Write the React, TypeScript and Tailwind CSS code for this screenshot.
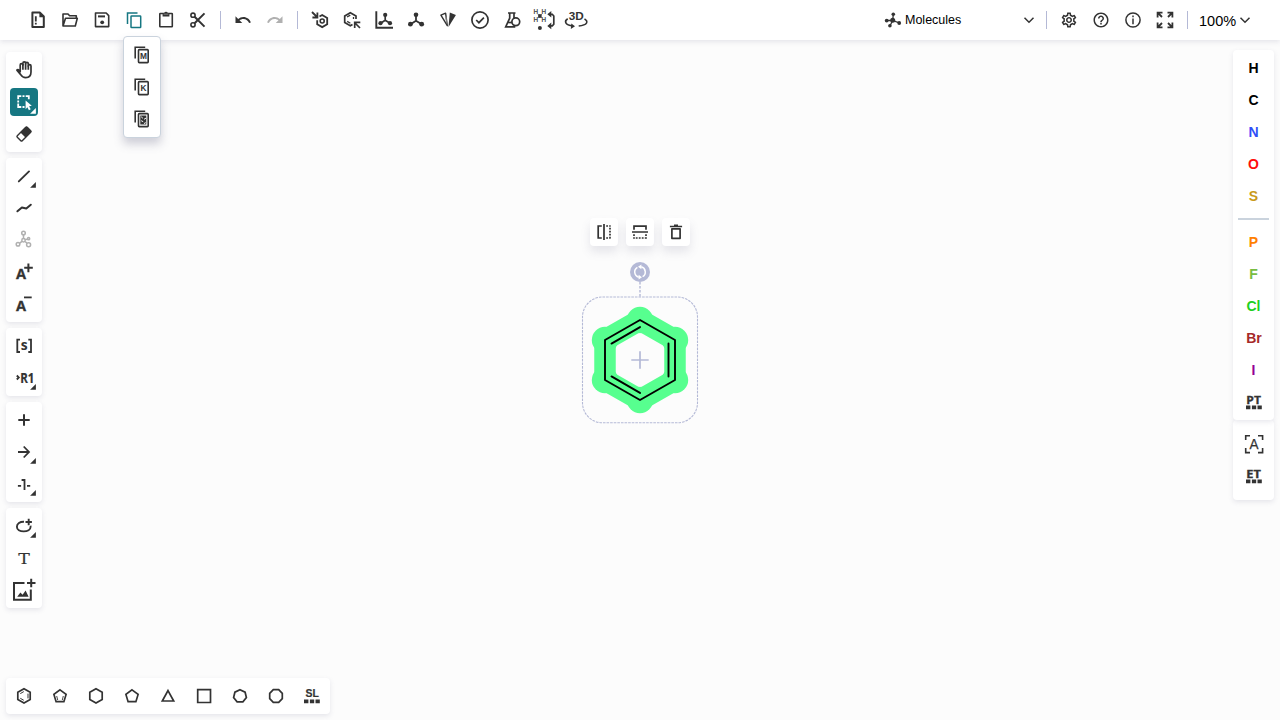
import type { ReactNode } from "react";
import { MdOutlineSettings, MdHelpOutline } from "react-icons/md";

const SANS = "font-['Liberation_Sans',Arial,sans-serif]";
const HUMANIST = "Open Sans, Noto Sans, sans-serif";

function Icon({ children, w = 1.8, className = "" }: { children: ReactNode; w?: number; className?: string }) {
  return (
    <svg
      width="24"
      height="24"
      viewBox="0 0 24 24"
      fill="none"
      stroke="currentColor"
      strokeWidth={w}
      className={`shrink-0 overflow-visible ${className}`}
    >
      {children}
    </svg>
  );
}

const solid = { fill: "currentColor", stroke: "none" };

function Label({ x, y, size, children, weight = 700, length, family = "Liberation Sans, Arial, sans-serif", outline = 0 }: {
  x: number; y: number; size: number; children: string; weight?: number; length?: number; family?: string; outline?: number;
}) {
  return (
    <text x={x} y={y} fontSize={size} fontWeight={weight} fontFamily={family} textLength={length} lengthAdjust="spacingAndGlyphs" fill="currentColor" strokeWidth={outline}>
      {children}
    </text>
  );
}

function TopButton({ children, className = "" }: { children: ReactNode; className?: string }) {
  return <button className={`flex h-8 w-8 items-center justify-center ${className}`}>{children}</button>;
}

function Divider() {
  return <div className="mx-1.5 h-[18px] w-px bg-[#b4b9d6]" />;
}

function Tool({ children, active = false, more = false, className = "" }: {
  children: ReactNode; active?: boolean; more?: boolean; className?: string;
}) {
  return (
    <button className={`relative flex h-7 w-7 items-center justify-center rounded ${active ? "bg-[#167782] text-white" : ""} ${className}`}>
      {children}
      {more && (
        <svg width="6" height="6" viewBox="0 0 6 6" className="absolute right-[2px] bottom-[2px]" fill="currentColor">
          <path d="M5.9 0v5.8H.1z" />
        </svg>
      )}
    </button>
  );
}

function ToolGroup({ children }: { children: ReactNode }) {
  return <div className="flex flex-col gap-1 rounded bg-white p-1 shadow-[0_2px_5px_rgba(103,104,132,0.15)]">{children}</div>;
}

function Undo() {
  return (
    <g transform="translate(3 3) scale(.75)">
      <path {...solid} d="M12.5 8c-2.65 0-5.05.99-6.9 2.6L2 7v9h9l-3.62-3.62c1.39-1.16 3.16-1.88 5.12-1.88 3.54 0 6.55 2.31 7.6 5.5l2.37-.78C21.08 11.03 17.15 8 12.5 8z" />
    </g>
  );
}

function CopyFrame({ children }: { children: ReactNode }) {
  return (
    <Icon w={1.6}>
      <path d="M5.2 15.5V4.3h10" />
      <rect x="8.5" y="6.6" width="9.7" height="13" rx=".8" />
      {children}
    </Icon>
  );
}

function Squares() {
  return <path {...solid} d="M4 15.5h4.4v3.8H4zM9.9 15.5h4.3v3.8H9.9zM15.5 15.5h4.3v3.8h-4.3z" />;
}

function Chevron() {
  return (
    <svg width="12" height="8" viewBox="0 0 12 8" fill="none" stroke="#333" strokeWidth="1.5">
      <path d="M1.5 1.8 6 6.3l4.5-4.5" />
    </svg>
  );
}

function Header() {
  return (
    <header className="relative z-10 flex h-10 shrink-0 items-center bg-white pl-[22px] shadow-[0_2px_5px_rgba(103,104,132,0.15)]">
      <TopButton>
        <Icon>
          <path d="M6.4 4.6h7.6l3.8 3.9v10.6H6.4z" strokeWidth="2" strokeLinejoin="round" />
          <path {...solid} d="M13.4 4.2v5H18z" />
          <path d="M9.8 8.2v5.2M9.8 14.8v1.8" />
        </Icon>
      </TopButton>
      <TopButton>
        <Icon w={1.6}>
          <path d="M5 18V6h5l1.6 1.7h6.7v2.5M5 18l2.5-7.8h11.8L17.3 18z" strokeLinejoin="round" />
        </Icon>
      </TopButton>
      <TopButton>
        <Icon w={1.6}>
          <path d="M5.5 5h10.7L18.7 7.6v11H5.5z" strokeLinejoin="round" />
          <path d="M8 8.4h7" strokeWidth="2" />
          <circle cx="12.2" cy="14.3" r="1.9" {...solid} />
        </Icon>
      </TopButton>
      <TopButton className="text-[#167782]">
        <Icon w={1.5}>
          <path d="M5.5 16V5h10" />
          <rect x="9" y="8" width="9.7" height="11.5" rx=".6" />
        </Icon>
      </TopButton>
      <TopButton>
        <Icon w={1.6}>
          <rect x="5.8" y="5.5" width="12.5" height="13.3" rx=".5" />
          <path {...solid} d="M8.6 5h1.6a1.9 1.9 0 0 1 3.6 0h1.6v3.6H8.6z" />
          <path d="M9.6 6.2h4.8" stroke="#777" strokeWidth="1.2" />
        </Icon>
      </TopButton>
      <TopButton>
        <Icon w={1.6}>
          <circle cx="7" cy="7.2" r="2.1" />
          <circle cx="7" cy="16.8" r="2.1" />
          <path d="m8.6 8.7 9.9 9.9M8.6 15.3l9.9-9.9" strokeWidth="2" />
        </Icon>
      </TopButton>
      <Divider />
      <TopButton><Icon><Undo /></Icon></TopButton>
      <TopButton className="text-[#b0b0b0]"><Icon className="-scale-x-100"><Undo /></Icon></TopButton>
      <Divider />
      <TopButton>
        <Icon w={1.8}>
          <path d="m4 4 5 5M9.4 4.5v5H4.4" />
          <path d="M11.5 8.5 14.2 7l5 2.9v6.3l-5 2.9-5-2.9v-4" />
          <circle cx="14.2" cy="13" r="2" strokeWidth="1.6" />
        </Icon>
      </TopButton>
      <TopButton>
        <Icon w={1.7}>
          <path d="M12.5 16.4 10.3 17.7 4.7 14.5V8l5.6-3.2L16 8v3" />
          <path d="m7 9 3.3-1.9M7.2 13.4l3.2 1.8M13.5 9v2" strokeWidth="1.3" />
          <path d="m20 20-5-5M14.7 20v-5.6h5.6" />
        </Icon>
      </TopButton>
      <TopButton>
        <Icon w={1.9}>
          <path d="M4.3 3.3v16.4H21" />
          <path d="M13.2 7v5.3l-4.6 3M13.2 12.3l4.8 3" strokeWidth="1.7" />
          <g {...solid}><circle cx="13.2" cy="6.9" r="2.1" /><circle cx="8.5" cy="15.2" r="2.1" /><circle cx="18" cy="15.2" r="2.1" /></g>
        </Icon>
      </TopButton>
      <TopButton>
        <Icon w={1.8}>
          <path d="M12 7v5.8l-5.5 3.5M12 12.8l5.7 3.5" />
          <g {...solid}><circle cx="12" cy="6.8" r="2.3" /><circle cx="6.4" cy="16.2" r="2.4" /><circle cx="17.7" cy="16.2" r="2.4" /></g>
        </Icon>
      </TopButton>
      <TopButton>
        <Icon w={1.4}>
          <path d="m4.9 7.2 4.7-2 1.7 12.5z" strokeLinejoin="round" />
          <path d="m10 8.5.8 7" strokeWidth="1" stroke="#888" />
          <path {...solid} d="M13.8 4.4 19.9 7l-7.4 11.9z" />
        </Icon>
      </TopButton>
      <TopButton>
        <Icon w={1.7}>
          <circle cx="12" cy="12" r="8.1" />
          <path d="m8.2 12 2.7 2.7 5-5" />
        </Icon>
      </TopButton>
      <TopButton>
        <Icon w={1.7}>
          <path d="M8 5h7.5M9.7 5v5.2L5.7 18.8h9.6M14 5v5" />
          <circle cx="15.8" cy="13.8" r="3.9" />
          <path d="M8 14.5h4" />
        </Icon>
      </TopButton>
      <TopButton>
        <Icon w={1.7}>
          <g fontSize="6.3" fontFamily="Liberation Sans, sans-serif" fill="currentColor" stroke="currentColor" strokeWidth=".2">
            <text x="1.5" y="6">H</text><text x="9.6" y="6">H</text>
            <text x="1.5" y="14.3">H</text><text x="9.6" y="14.3">H</text>
          </g>
          <path d="m5.8 6 4 4M9.8 6l-4 4" strokeWidth=".8" />
          <g {...solid}><circle cx="7.9" cy="8" r="1.9" /><circle cx="7.9" cy="20" r="2" /><path d="M15.3 6.3 19.3 3v6.6zM15.3 17.9l4-3.3v6.6z" /></g>
          <path d="M18.5 6.3h1.8l1.5 1.7v8.2l-1.5 1.7h-1.8" />
        </Icon>
      </TopButton>
      <TopButton>
        <Icon w={1.6}>
          <Label x={4.8} y={12.3} size={11.6} length={15}>3D</Label>
          <path d="M3.7 10.8C.2 13 .5 16.8 9 18M20.5 10.8c4.2 2.7 3 6.3-5.8 7.2" />
          <path {...solid} d="m11 18.2-4.2 2.7.5-5.3z" />
        </Icon>
      </TopButton>

      <div className={`ml-auto flex items-center text-black ${SANS}`}>
        <Icon w={1.3} className="text-[#333]">
          <path d="M5.5 12.5h6.2l.6-6M11.7 12.5l6.5 2.4M11.7 12.5 9 17.7" />
          <g {...solid}><circle cx="5.7" cy="12.6" r="1.9" /><circle cx="12.3" cy="6.2" r="1.8" /><circle cx="18.2" cy="15" r="1.9" /><circle cx="8.9" cy="17.8" r="1.8" /><circle cx="11.7" cy="12.3" r="2.5" /></g>
        </Icon>
        <span className="w-[118px] text-[12.5px] leading-5">Molecules</span>
        <Chevron />
      </div>
      <div className="ml-[5px] flex items-center">
        <Divider />
        <TopButton><MdOutlineSettings size={18} /></TopButton>
        <TopButton><MdHelpOutline size={18} /></TopButton>
        <TopButton>
          <Icon w={1.5}><circle cx="12" cy="12" r="7.1" /><path d="M12 10.6v5.7M12 7.5v1.8" /></Icon>
        </TopButton>
        <TopButton>
          <Icon w={1.8}>
            <path d="M4.6 9.5V4.7h4.9M14.5 4.7h4.9v4.8M19.4 14.5v4.8h-4.9M9.5 19.3H4.6v-4.8M5 5l4 4M19 5l-4 4M19 19l-4-4M5 19l4-4" />
          </Icon>
        </TopButton>
        <Divider />
      </div>
      <div className={`ml-[5px] flex w-[81px] items-center text-black ${SANS}`}>
        <span className="w-10 pt-px text-[14.5px] leading-5">100%</span>
        <Chevron />
      </div>
    </header>
  );
}

function CopyMenu() {
  return (
    <div className="absolute top-9 left-[123px] z-20 flex w-[38px] flex-col items-center gap-2 rounded border border-[#cad3dd] bg-white pt-1.5 pb-1.5 shadow-[0_6px_10px_rgba(103,104,132,0.3)]">
      <CopyFrame><Label x={9.9} y={16.3} size={8.6} length={7}>M</Label></CopyFrame>
      <CopyFrame><Label x={10.6} y={16.3} size={8.8} length={6}>K</Label></CopyFrame>
      <CopyFrame>
        <path {...solid} d="M10.3 8.5h6v9h-6z" />
        <path d="m11.2 9.8 1.7 1.5M14 12.3l2-1.2M11.2 13.7l2 1M14 16.5l1.8-.8" stroke="#fff" strokeWidth="1" />
      </CopyFrame>
    </div>
  );
}

function LeftBar() {
  return (
    <aside className="flex w-9 flex-col gap-1.5">
      <ToolGroup>
        <Tool>
          <Icon w={1.7}>
            <path
              strokeLinejoin="round"
              d="M8.2 13.8V7a1.35 1.35 0 0 1 2.7 0V5.3a1.35 1.35 0 0 1 2.7 0v.5a1.35 1.35 0 0 1 2.7 0V8a1.35 1.35 0 0 1 2.7 0v6c0 3.5-2 5.6-5.3 5.6-2.5 0-3.8-1-5-3l-3.8-4.5c.8-1 2.2-.6 3.3 1.7z"
            />
            <path d="M10.9 6v5.8M13.6 5.8v6M16.3 7.5v4.3" />
          </Icon>
        </Tool>
        <Tool active more>
          <Icon w={1.8}>
            <path d="M9.3 17H6.2v-3.4M6.2 9.2V6.2h3.1M13.7 6.2h3.1v3M6.2 10.4v2M10.5 6.2h2M10.5 17h2" />
            <path {...solid} d="m13.6 10.5 6.2 5.2-2.7.6 1.6 3-1.8.9-1.5-3-1.8 2z" />
          </Icon>
        </Tool>
        <Tool>
          <Icon w={1.4}>
            <g transform="rotate(-45 12 12)">
              <rect x="5" y="8.5" width="14" height="7" rx="1" />
              <rect x="10.5" y="8.5" width="8.5" height="7" {...solid} />
            </g>
          </Icon>
        </Tool>
      </ToolGroup>
      <ToolGroup>
        <Tool more><Icon w={1.9}><path d="M6.8 17.4 17 7.4" strokeLinecap="round" /></Icon></Tool>
        <Tool><Icon w={2}><path d="m5.4 15.3 4.5-3.9 4.4 1L18.8 8.7" strokeLinecap="round" strokeLinejoin="round" /></Icon></Tool>
        <Tool className="text-[#b0b0b0]">
          <Icon w={1.5}>
            <path d="M11.5 6.8v4M10 13.3l-2.3 1.8M13.1 13.5l1.8 1.6M13.2 11.7l2-.6" />
            <circle cx="11.5" cy="5" r="1.8" /><circle cx="11.5" cy="12.3" r="1.7" /><circle cx="6" cy="16.2" r="1.8" /><circle cx="16.6" cy="16.7" r="2" /><circle cx="16.6" cy="10.7" r="1.1" />
          </Icon>
        </Tool>
        <Tool><Icon w={2}><Label x={3.9} y={19.3} size={14.6} family={HUMANIST} outline={0.3}>A</Label><path d="M12.2 7.7h8.6M16.4 3.4v8.8" /></Icon></Tool>
        <Tool><Icon w={1.8}><Label x={3.9} y={19.3} size={14.6} family={HUMANIST} outline={0.3}>A</Label><path d="M12 5.4h7.7" /></Icon></Tool>
      </ToolGroup>
      <ToolGroup>
        <Tool><Icon w={1.8}><path d="M8 5.7H5.3V18H8M16.3 5.7H19V18h-2.7" /><Label x={8.7} y={16} size={14.5} length={6.9} family={HUMANIST}>s</Label></Icon></Tool>
        <Tool more><Icon w={1.8}><path d="m4.8 9.5 2 2-2 2" /><Label x={8.2} y={16.5} size={13.6} length={14.2} family={HUMANIST} outline={0.2}>R1</Label></Icon></Tool>
      </ToolGroup>
      <ToolGroup>
        <Tool><Icon w={2}><path d="M6.3 12h11.4M12 6.3v11.4" /></Icon></Tool>
        <Tool more><Icon w={1.8}><path d="M6 12h11M11.7 6.5l5.3 5.5-5.3 5.5" /></Icon></Tool>
        <Tool more><Icon w={1.8}><path d="M5.9 13.8h3.2M15 13.8h3.2M9.6 8h2.9v9.9" /></Icon></Tool>
      </ToolGroup>
      <ToolGroup>
        <Tool more><Icon w={1.9}><path d="M12 7.7c-4-.2-7.1 2-7.1 5 0 2.8 3 4.7 6.8 4.7s6.9-1.9 6.9-4.7c0-.4 0-.7-.2-1M13.5 8h6.4M16.7 4.8v6.4" /></Icon></Tool>
        <Tool>
          <Icon>
            <Label x={6.2} y={18} size={15.3} length={11.6} weight={400} family="DejaVu Serif, serif" outline={0.15}>T</Label>
          </Icon>
        </Tool>
        <Tool>
          <Icon w={2}>
            <path d="M12.5 5H2v16.8h16.8V11.5M15 5h8.5M19.2.8v8.5" />
            <path {...solid} d="m5.2 18.8 3.2-4.4 2.2 2.4 3-4.2 3 6.2z" />
          </Icon>
        </Tool>
      </ToolGroup>
    </aside>
  );
}

const elements = [
  [["H", "text-black"], ["C", "text-black"], ["N", "text-[#304ff7]"], ["O", "text-[#ff0d0d]"], ["S", "text-[#c99a19]"]],
  [["P", "text-[#ff8000]"], ["F", "text-[#78bc42]"], ["Cl", "text-[#1fd01f]"], ["Br", "text-[#a62929] pl-px"], ["I", "text-[#940094]"]],
];

function Atoms({ items }: { items: string[][] }) {
  return (
    <>
      {items.map(([symbol, color]) => (
        <button key={symbol} className={`h-8 text-[14px] font-bold ${SANS} ${color}`}>{symbol}</button>
      ))}
    </>
  );
}

function RightBar() {
  return (
    <aside className="-mt-0.5 flex w-[41px] flex-col">
      <div className="relative z-[1] flex flex-col items-center rounded bg-white pt-0.5 pb-0.5 shadow-[0_2px_5px_rgba(103,104,132,0.15)]">
        <Atoms items={elements[0]} />
        <div className="my-1.5 h-0.5 w-[31px] bg-[#cad3dd]" />
        <Atoms items={elements[1]} />
        <button className="flex h-8 items-center pl-px"><Icon><Label x={4.3} y={13.6} size={11.2} length={14.6} family={HUMANIST} outline={0.3}>PT</Label><Squares /></Icon></button>
      </div>
      <div className="flex h-20 flex-col items-center rounded bg-white pt-2 shadow-[0_2px_5px_rgba(103,104,132,0.15)]">
        <button className="flex h-8 items-center pl-px">
          <Icon w={1.6}>
            <path d="M3.7 8V3.7H8M16 3.7h4.6V8M20.6 16v4.6H16M8 20.6H3.7V16" />
            <Label x={7.5} y={17.2} size={13.8} length={9} weight={400} outline={0.25}>A</Label>
          </Icon>
        </button>
        <button className="flex h-8 items-center pl-px"><Icon><Label x={4.3} y={13.6} size={11.2} length={14.6} family={HUMANIST} outline={0.3}>ET</Label><Squares /></Icon></button>
      </div>
    </aside>
  );
}

function BottomBar() {
  return (
    <footer className="flex h-9 w-[324px] gap-2 rounded bg-white p-1 shadow-[0_2px_5px_rgba(103,104,132,0.15)]">
      <Tool><Icon w={1.7}><path d="m12 4.8 6.2 3.5v7.3L12 19.1l-6.2-3.5V8.3z" /><path d="m8.3 9.6 3.5-2M8.3 14.3l3.5 2M16 9.6v4.8" strokeWidth="1" /></Icon></Tool>
      <Tool><Icon w={1.7}><path d="m12 5.9 6.1 4.5-2.2 7.3H8.1l-2.2-7.3z" /><path d="m9.7 16-1-4M14.3 16l1-4" strokeWidth=".9" /></Icon></Tool>
      <Tool><Icon w={1.7}><path d="m12 4.8 6.2 3.5v7.3L12 19.1l-6.2-3.5V8.3z" /></Icon></Tool>
      <Tool><Icon w={1.7}><path d="m12 5.9 6.1 4.5-2.2 7.3H8.1l-2.2-7.3z" /></Icon></Tool>
      <Tool><Icon w={1.7}><path d="M12 6.6 17.7 17H6.3z" /></Icon></Tool>
      <Tool><Icon w={1.7}><path d="M5.7 5.7h12.8v12.8H5.7z" /></Icon></Tool>
      <Tool><Icon w={1.7}><path d="m12 5.7 5.1 2.5 1.3 5.4-3.5 4.3H9.1l-3.5-4.3 1.3-5.4z" /></Icon></Tool>
      <Tool><Icon w={1.7}><path d="M9.3 5.7h5.4l3.6 3.7v5.2l-3.6 3.7H9.3l-3.6-3.7V9.4z" /></Icon></Tool>
      <Tool><Icon><Label x={5.6} y={12.8} size={11.2} length={13.3} outline={0.2}>SL</Label><Squares /></Icon></Tool>
    </footer>
  );
}

function Action({ children }: { children: ReactNode }) {
  return <button className="flex h-7 w-7 items-center justify-center rounded bg-white shadow-[0_6px_10px_rgba(103,104,132,0.15)]">{children}</button>;
}

function Structure() {
  const ring = "M640 320l35 20v40l-35 20-35-20v-40z";
  const atoms = [[640, 320], [675, 340], [675, 380], [640, 400], [605, 380], [605, 340]];
  return (
    <div className="absolute top-[218px] left-[580px] flex w-[120px] flex-col items-center">
      <div className="flex gap-2">
        <Action>
          <Icon w={1.7}>
            <path d="M9.8 6H6.2v12h3.6M12 4v16" />
            <path d="M14.2 6h4.5M18 7.8v10M14.2 18h4.5" strokeDasharray="1.8 1.2" />
          </Icon>
        </Action>
        <Action>
          <Icon w={1.7}>
            <path d="M6 9.8V6.2h12v3.6M4 12h16" />
            <path d="M6 14.2v4.5M7.8 18h10M18 14.2v4.5" strokeDasharray="1.8 1.2" />
          </Icon>
        </Action>
        <Action>
          <Icon w={1.7}>
            <path d="M5.9 6.5h12.2M10 5.3h4" />
            <path d="M7.9 8.8h8.2v9.5H7.9z" strokeLinejoin="round" />
          </Icon>
        </Action>
      </div>
      <svg width="120" height="170" viewBox="580 256 120 170" fill="none" className="mt-2.5">
        <path d="M640 282v15" stroke="#b4b9d6" strokeWidth="1.4" strokeDasharray="2.5 1.5" />
        <rect x="582.5" y="297" width="115" height="125.8" rx="20" stroke="#b4b9d6" strokeWidth="1.1" strokeDasharray="2.6 1" />
        <circle cx="640" cy="272" r="10" fill="#b4b9d6" />
        <path d="M637.4 267.3a5.4 5.4 0 0 0 1.4 9.9M642.6 276.7a5.4 5.4 0 0 0-1.4-9.9" stroke="#fff" strokeWidth="1.5" />
        <path d="m638.6 274.8 3.4 2.4-3.4 2.4zM641.4 264.4l-3.4 2.4 3.4 2.4z" fill="#fff" />
        <path d={ring} stroke="#57ff8f" strokeWidth="21.5" strokeLinejoin="round" />
        {atoms.map(([x, y]) => <circle key={`${x}-${y}`} cx={x} cy={y} r="13.2" fill="#57ff8f" />)}
        <path d="m640 333.2 23.6 13.5v26.6L640 386.8l-23.6-13.5v-26.6z" fill="#fcfcfc" />
        <path d={`${ring}M668.5 343.5v33M611.5 343.6l28.5-16.5M611.5 376.4l28.5 16.5`} stroke="#000" strokeWidth="1.9" strokeLinecap="round" strokeLinejoin="round" />
        <path d="M631.3 360h17.4M640 351.3v17.4" stroke="#b4b9d6" strokeWidth="1.7" />
      </svg>
    </div>
  );
}

export default function App() {
  return (
    <div className={`relative flex h-screen w-screen flex-col overflow-hidden bg-[#fcfcfc] text-[#333] ${SANS}`}>
      <Header />
      <CopyMenu />
      <main className="flex flex-1 items-start justify-between pt-3 pr-1.5 pl-1.5">
        <LeftBar />
        <RightBar />
      </main>
      <Structure />
      <div className="pb-1.5 pl-1.5">
        <BottomBar />
      </div>
    </div>
  );
}
